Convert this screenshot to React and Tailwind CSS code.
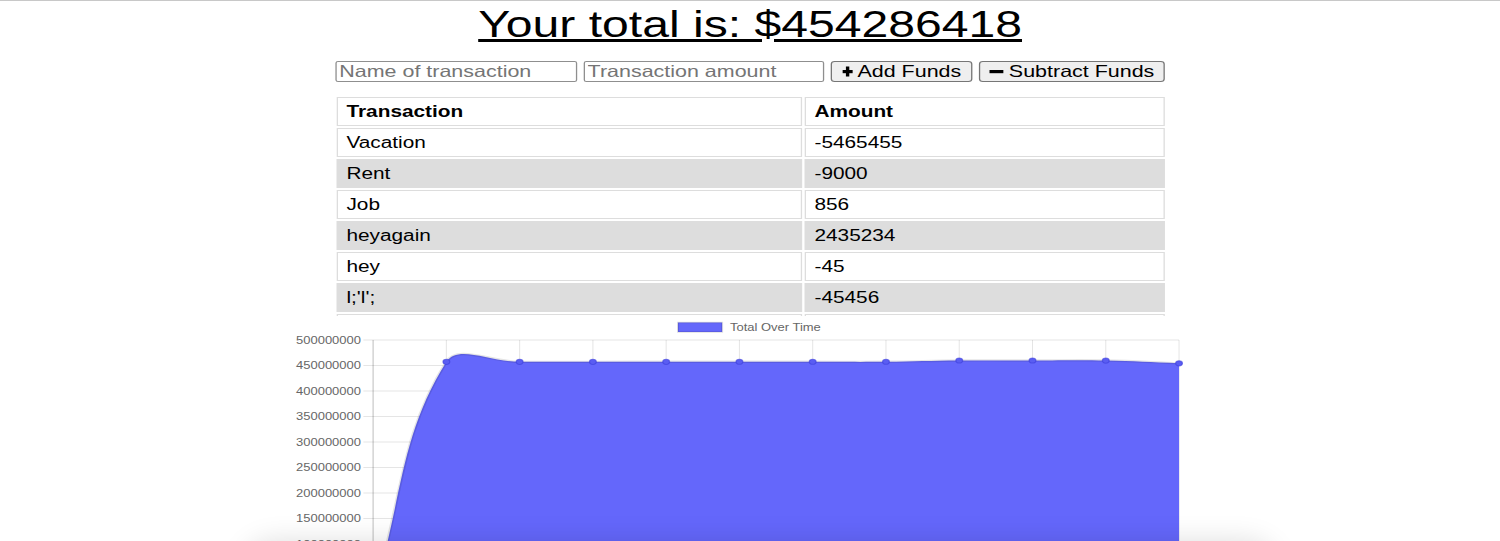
import React from "react";

// the whole page is drawn 1.3x wider than tall, so lay it out at 1154px and stretch it
const transactions = [
  { name: "Vacation", value: -5465455 },
  { name: "Rent", value: -9000 },
  { name: "Job", value: 856 },
  { name: "heyagain", value: 2435234 },
  { name: "hey", value: -45 },
  { name: "l;'l';", value: -45456 },
  { name: "bonus", value: 120000 },
  { name: "savings", value: -80000 },
];

const totals = [
  0, 457210000, 457150000, 457180000, 457260000, 457370284, 457324828, 457324783, 459760017, 459760873,
  459751873, 454286418,
];

const X0 = 287;
const STEP = 56.36;
const TOP = 340;
const ZERO = 595;
const XN = X0 + STEP * (totals.length - 1);
const yOf = (v) => ZERO - (v / 500000000) * (ZERO - TOP);
const clamp = (v, a, b) => Math.min(b, Math.max(a, v));

function splinePath(pts, tension = 0.4) {
  const cps = pts.map((p, i) => {
    const prev = pts[i - 1] || p;
    const next = pts[i + 1] || p;
    const d01 = Math.hypot(p.x - prev.x, p.y - prev.y);
    const d12 = Math.hypot(next.x - p.x, next.y - p.y);
    const s01 = d01 + d12 ? d01 / (d01 + d12) : 0;
    const s12 = d01 + d12 ? d12 / (d01 + d12) : 0;
    const fa = tension * s01;
    const fb = tension * s12;
    return {
      prev: {
        x: clamp(p.x - fa * (next.x - prev.x), X0, XN),
        y: clamp(p.y - fa * (next.y - prev.y), TOP, ZERO),
      },
      next: {
        x: clamp(p.x + fb * (next.x - prev.x), X0, XN),
        y: clamp(p.y + fb * (next.y - prev.y), TOP, ZERO),
      },
    };
  });
  let d = `M${pts[0].x},${pts[0].y}`;
  for (let i = 1; i < pts.length; i++) {
    const a = cps[i - 1].next;
    const b = cps[i].prev;
    d += ` C${a.x},${a.y} ${b.x},${b.y} ${pts[i].x},${pts[i].y}`;
  }
  return d;
}

function PlusIcon() {
  return (
    <svg width="8" height="11" viewBox="0 0 8 11">
      <rect x="0" y="4" width="8" height="3.2" fill="#000" />
      <rect x="2.7" y="0.5" width="2.6" height="10" fill="#000" />
    </svg>
  );
}

function MinusIcon() {
  return (
    <svg width="11" height="11" viewBox="0 0 11 11">
      <rect x="0" y="4" width="11" height="3.2" fill="#000" />
    </svg>
  );
}

function Chart() {
  const pts = totals.map((v, i) => ({ x: X0 + i * STEP, y: yOf(v) }));
  const line = splinePath(pts);
  const area = `${line} L${XN},${ZERO} L${X0},${ZERO} Z`;
  const ticks = Array.from({ length: 11 }, (_, k) => 500000000 - k * 50000000);

  return (
    <svg width="1154" height="300" viewBox="0 316 1154 300" className="block">
      <rect x="521.5" y="322.5" width="34" height="9.5" fill="#6467fb" stroke="rgba(0,0,0,0.12)" strokeWidth="1.5" />
      <text x="561.5" y="331" fontSize="10" fill="#666" fontFamily="Liberation Sans, Arial, sans-serif">
        Total Over Time
      </text>

      {ticks.map((v) => (
        <g key={v}>
          <line
            x1="279.5"
            x2={XN}
            y1={yOf(v)}
            y2={yOf(v)}
            stroke={v === 0 ? "rgba(0,0,0,0.25)" : "rgba(0,0,0,0.1)"}
            strokeWidth="1"
          />
          <text
            x="277.7"
            y={yOf(v)}
            dy="3.6"
            textAnchor="end"
            fontSize="10"
            fill="#666"
            fontFamily="Liberation Sans, Arial, sans-serif"
          >
            {v}
          </text>
        </g>
      ))}

      {pts.map((p, i) => (
        <line
          key={i}
          x1={p.x}
          x2={p.x}
          y1={TOP}
          y2={ZERO + 8}
          stroke={i === 0 ? "rgba(0,0,0,0.25)" : "rgba(0,0,0,0.1)"}
          strokeWidth="0.8"
        />
      ))}

      <path d={area} fill="#6467fb" />
      <path d={line} fill="none" stroke="rgba(0,0,0,0.1)" strokeWidth="2.4" />

      {pts.map((p, i) => (
        <circle key={i} cx={p.x} cy={p.y} r="2.6" fill="#5a5df2" stroke="rgba(60,62,220,0.6)" strokeWidth="1" />
      ))}
    </svg>
  );
}

export default function App() {
  return (
    <div className="relative h-[541px] overflow-hidden bg-white">
      <div className="w-[1154px] origin-top-left scale-x-[1.3] border-t border-[#c8c8c8] font-['Liberation_Sans',Arial,sans-serif] text-black">
        <h1 className="mt-[3px] text-center text-[37px] leading-[42px] font-normal underline">
          Your total is: $454286418
        </h1>

        <div className="mt-[15px] flex justify-center gap-[5px]">
          <input
            placeholder="Name of transaction"
            className="h-[21px] w-[186px] rounded-[2px] border border-[#8f8f8f] bg-white px-[2px] text-[16.5px] leading-[17px] outline-none placeholder:text-[#757575]"
          />
          <input
            placeholder="Transaction amount"
            className="h-[21px] w-[185px] rounded-[2px] border border-[#8f8f8f] bg-white px-[2px] text-[16.5px] leading-[17px] outline-none placeholder:text-[#757575]"
          />
          <button className="flex h-[21px] w-[109px] items-center justify-center gap-[4px] rounded-[3px] border border-[#767676] bg-[#efefef] text-[16.5px] leading-[17px]">
            <PlusIcon />
            Add Funds
          </button>
          <button className="flex h-[21px] w-[143px] items-center justify-center gap-[4px] rounded-[3px] border border-[#767676] bg-[#efefef] text-[16.5px] leading-[17px]">
            <MinusIcon />
            Subtract Funds
          </button>
        </div>

        <div className="mt-[13px] h-[221px] overflow-hidden">
          <table className="mx-auto w-[641px] table-fixed border-separate border-spacing-[2px] text-[16px]">
            <colgroup>
              <col className="w-[358px]" />
              <col className="w-[277px]" />
            </colgroup>
            <thead>
              <tr>
                <th className="border border-[#dddddd] px-[7px] py-[4px] text-left leading-[19px] font-bold">Transaction</th>
                <th className="border border-[#dddddd] px-[7px] py-[4px] text-left leading-[19px] font-bold">Amount</th>
              </tr>
            </thead>
            <tbody>
              {transactions.map((t, i) => (
                <tr key={t.name} className={i % 2 === 1 ? "bg-[#dddddd]" : "bg-white"}>
                  <td className="border border-[#dddddd] px-[7px] py-[4px] leading-[19px]">{t.name}</td>
                  <td className="border border-[#dddddd] px-[7px] py-[4px] leading-[19px]">{t.value}</td>
                </tr>
              ))}
            </tbody>
          </table>
        </div>

        <Chart />
      </div>

      <div className="absolute left-[250px] top-[547px] h-[80px] w-[1020px] rounded-[24px] bg-white shadow-[0_0_28px_6px_rgba(0,0,0,0.13)]" />
    </div>
  );
}
